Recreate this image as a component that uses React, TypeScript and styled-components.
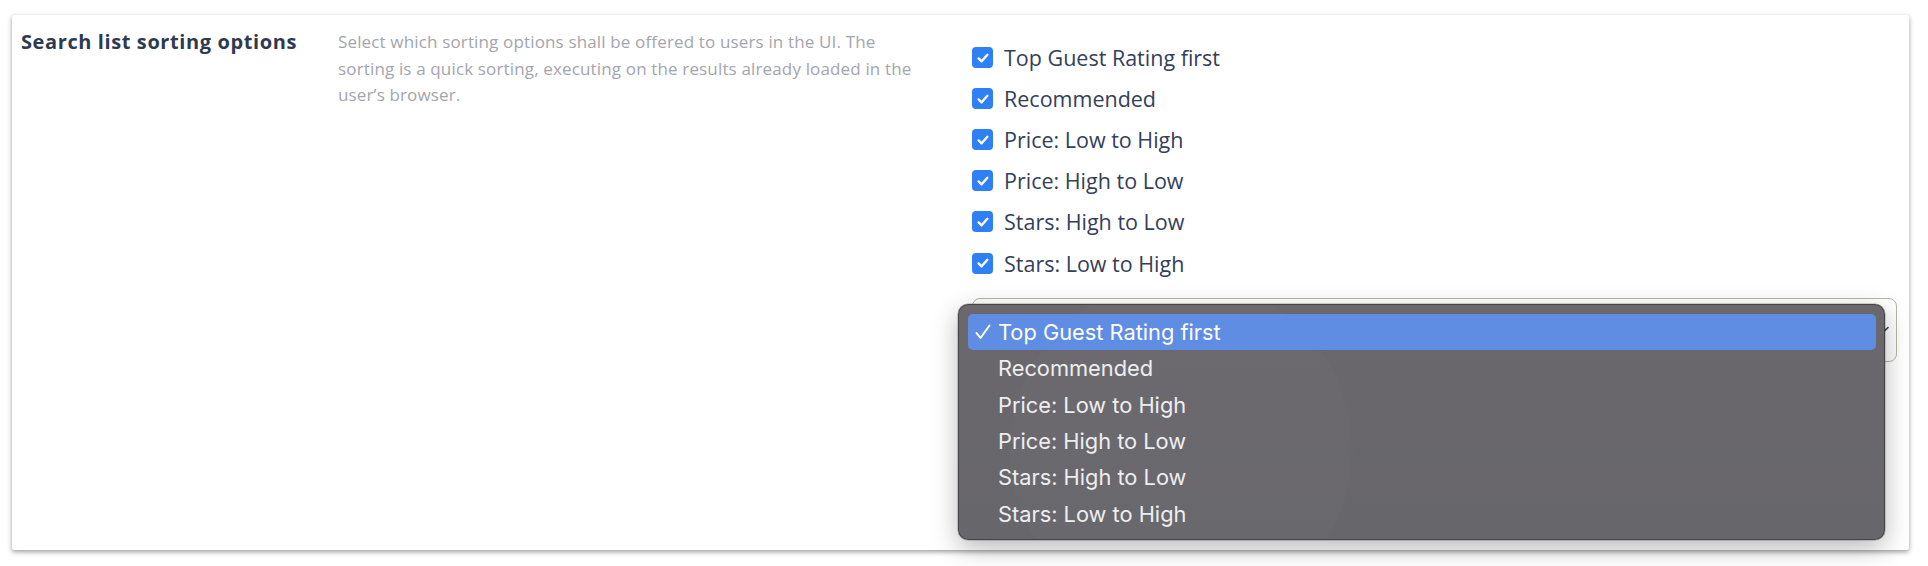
import React from "react";
import styled, { createGlobalStyle } from "styled-components";

const GlobalStyle = createGlobalStyle`
  html, body { margin: 0; padding: 0; background: #ffffff; }
  body { font-family: "Open Sans", "Noto Sans", sans-serif; }
  * { box-sizing: border-box; }
`;

const Page = styled.div`
  width: 1928px;
  height: 566px;
  padding: 15px 19px 16px 12px;
  background: #ffffff;
`;

const Card = styled.section`
  position: relative;
  height: 535px;
  background: #ffffff;
  border-radius: 2px;
  box-shadow: 0 2px 5px rgba(0, 0, 0, 0.38), 0 0 1px rgba(0, 0, 0, 0.15);
`;

const Row = styled.div`
  display: grid;
  grid-template-columns: 317px 634px 1fr;
  padding: 0 12px 0 9px;
`;

const Title = styled.h3`
  margin: 0;
  padding-top: 14px;
  font-family: "Open Sans", "Noto Sans", sans-serif;
  font-weight: 700;
  font-size: 20px;
  line-height: 26px;
  letter-spacing: 0.6px;
  color: #2e3a50;
`;

const Description = styled.p`
  margin: 0;
  padding-top: 14px;
  width: 596px;
  font-size: 17px;
  line-height: 26.5px;
  letter-spacing: 0.15px;
  color: #a3a5ad;
`;

const Options = styled.div`
  display: flex;
  flex-direction: column;
  padding-top: 22px;
`;

const OptionRow = styled.label`
  display: flex;
  align-items: center;
  gap: 11px;
  height: 41.1px;
  font-size: 21.5px;
  color: #34405a;
  cursor: pointer;
`;

const Box = styled.span`
  display: inline-flex;
  align-items: center;
  justify-content: center;
  width: 21px;
  height: 21px;
  border-radius: 4px;
  background: #2f7ff5;
  flex-shrink: 0;
`;

const SelectWrap = styled.div`
  position: relative;
  margin-top: 14px;
`;

const SelectBox = styled.div`
  height: 64px;
  border: 1.5px solid #b7b5a3;
  border-radius: 8px;
  background: #ffffff;
  display: flex;
  align-items: center;
  justify-content: flex-end;
  padding: 0 4px 0 16px;
`;

const Popup = styled.ul`
  position: absolute;
  left: -14px;
  top: 6px;
  width: 927px;
  height: 236px;
  margin: 0;
  padding: 9px 8px 7px 9px;
  list-style: none;
  border-radius: 10px;
  border: 1px solid rgba(40, 40, 44, 0.55);
  background:
    radial-gradient(circle at 24% 62%, rgba(255, 255, 255, 0.012) 0 170px, transparent 172px),
    linear-gradient(180deg, #6a686d 0%, #67666b 100%);
  box-shadow: 0 8px 26px rgba(0, 0, 0, 0.28), 0 0 0 0.5px rgba(0, 0, 0, 0.3);
  z-index: 2;
`;

const Item = styled.li<{ $active?: boolean }>`
  display: flex;
  align-items: center;
  height: 36.4px;
  padding-left: 7px;
  border-radius: 5px;
  background: ${(p) => (p.$active ? "#5f8de3" : "transparent")};
  color: ${(p) => (p.$active ? "#ffffff" : "#eeeef0")};
  font-family: "Inter", "Noto Sans", sans-serif;
  font-size: 21.8px;
`;

const Tick = styled.span`
  display: inline-flex;
  align-items: center;
  width: 23px;
`;

const options = [
  "Top Guest Rating first",
  "Recommended",
  "Price: Low to High",
  "Price: High to Low",
  "Stars: High to Low",
  "Stars: Low to High",
];

const CheckIcon = () => (
  <svg width="14" height="14" viewBox="0 0 14 14" fill="none">
    <path d="M2.6 7.4 L5.6 10.3 L11.4 3.8" stroke="#fff" strokeWidth="2.4" strokeLinecap="round" strokeLinejoin="round" />
  </svg>
);

const MenuTick = () => (
  <svg width="16" height="18" viewBox="0 0 16 18" fill="none">
    <path d="M1.5 10 L5.5 15 L14.5 2.5" stroke="#ffffff" strokeWidth="2" strokeLinecap="round" strokeLinejoin="round" />
  </svg>
);

const Chevron = () => (
  <svg width="18" height="18" viewBox="0 0 18 18" fill="none">
    <path d="M4 6.5 L9 11.5 L14 6.5" stroke="#3a3f4c" strokeWidth="1.6" strokeLinecap="round" strokeLinejoin="round" />
  </svg>
);

export default function App() {
  return (
    <>
      <GlobalStyle />
      <Page>
        <Card>
          <Row>
            <Title>Search list sorting options</Title>
            <Description>
              Select which sorting options shall be offered to users in the UI. The sorting is a quick sorting,
              executing on the results already loaded in the user’s browser.
            </Description>
            <Options>
              {options.map((o) => (
                <OptionRow key={o}>
                  <Box>
                    <CheckIcon />
                  </Box>
                  {o}
                </OptionRow>
              ))}
              <SelectWrap>
                <SelectBox>
                  <Chevron />
                </SelectBox>
                <Popup>
                  {options.map((o, i) => (
                    <Item key={o} $active={i === 0}>
                      <Tick>{i === 0 ? <MenuTick /> : null}</Tick>
                      {o}
                    </Item>
                  ))}
                </Popup>
              </SelectWrap>
            </Options>
          </Row>
        </Card>
      </Page>
    </>
  );
}
